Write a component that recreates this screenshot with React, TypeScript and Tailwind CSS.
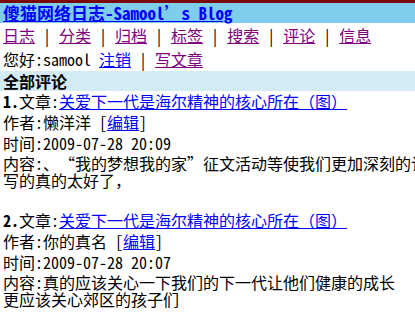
const font = { fontFamily: '"Noto Sans Mono CJK SC", "Noto Sans CJK SC", "DejaVu Sans Mono", monospace' };

const navItems = ['日志', '分类', '归档', '标签', '搜索', '评论', '信息'];

// full-width curly quotes, as the old page font draws them
const OpenQ = () => <span className="inline-block w-[16px] text-right">“</span>;
const CloseQ = () => <span className="inline-block w-[16px] text-left">”</span>;

interface Comment {
  no: number;
  title: string;
  author: string;
  time: string;
  first: React.ReactNode;
  second: string;
}

const comments: Comment[] = [
  {
    no: 1,
    title: '关爱下一代是海尔精神的核心所在（图）',
    author: '懒洋洋',
    time: '2009-07-28 20:09',
    first: (
      <>
        内容:、<OpenQ />我的梦想我的家<CloseQ />征文活动等使我们更加深刻的认识到
      </>
    ),
    second: '写的真的太好了，',
  },
  {
    no: 2,
    title: '关爱下一代是海尔精神的核心所在（图）',
    author: '你的真名',
    time: '2009-07-28 20:07',
    first: '内容:真的应该关心一下我们的下一代让他们健康的成长',
    second: '更应该关心郊区的孩子们',
  },
];

export default function App() {
  return (
    <div className="w-[415px] h-[317px] overflow-hidden bg-white text-black text-[16px]" style={font}>
      <div className="h-[3px] bg-[#7a0808]"></div>
      <div className="h-[20px] bg-[#7ecdea] px-[3px] leading-[20px] whitespace-nowrap">
        <a href="#" className="text-[17px] font-bold text-[#0000ff] underline">傻猫网络日志-Samool’s Blog</a>
      </div>

      <div className="h-[24px] px-[3px] leading-[24px] whitespace-nowrap">
        {navItems.map((item, i) => (
          <span key={item}>
            {i > 0 && <span> | </span>}
            <a href="#" className="text-[#800080] underline">{item}</a>
          </span>
        ))}
      </div>

      <div className="h-[24px] px-[3px] leading-[24px] whitespace-nowrap">
        您好:samool <a href="#" className="text-[#0000ff] underline">注销</a> | <a href="#" className="text-[#800080] underline">写文章</a>
      </div>

      <div className="h-[20px] bg-[#d3ebf5] px-[3px] leading-[20px] font-bold">全部评论</div>

      <div className="px-[3px] whitespace-nowrap">
        {comments.map((c) => (
          <div key={c.no} className="mb-[21px]">
            <div className="h-[21px] leading-[21px]">
              <b>{c.no}.</b>文章:<a href="#" className="text-[#0000ff] underline">{c.title}</a>
            </div>
            <div className="h-[21px] leading-[21px]">
              作者:{c.author} [<a href="#" className="text-[#0000ff] underline">编辑</a>]
            </div>
            <div className="h-[21px] leading-[21px]">时间:{c.time}</div>
            <div className="h-[18px] leading-[18px]">{c.first}</div>
            <div className="h-[17px] leading-[17px]">{c.second}</div>
          </div>
        ))}
      </div>
    </div>
  );
}
